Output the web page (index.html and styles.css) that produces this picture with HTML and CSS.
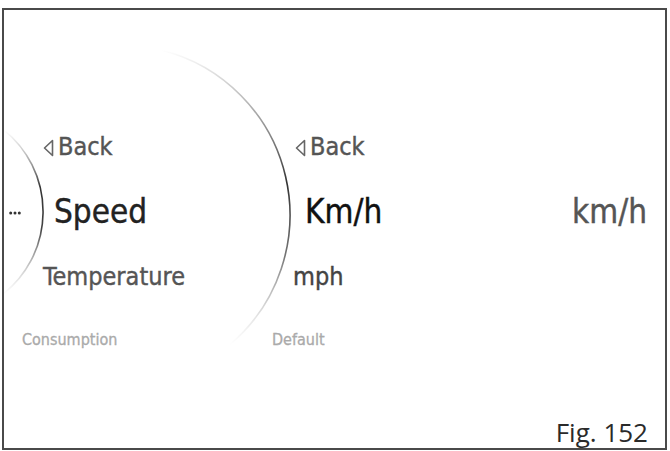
FILE: index.html
```
<!DOCTYPE html>
<html lang="en">
<head>
<meta charset="utf-8">
<title>Fig. 152 – Speed units</title>
<link rel="stylesheet" href="styles.css">
</head>
<body>
<div class="frame">
  <svg class="arcs" width="670" height="451" viewBox="0 0 670 451" aria-hidden="true">
    <defs>
      <linearGradient id="gBig" gradientUnits="userSpaceOnUse" x1="0" y1="50" x2="0" y2="345">
        <stop offset="0" stop-color="#999" stop-opacity="0"/>
        <stop offset="0.2" stop-color="#999" stop-opacity="0.8"/>
        <stop offset="0.45" stop-color="#333" stop-opacity="1"/>
        <stop offset="0.7" stop-color="#666" stop-opacity="0.9"/>
        <stop offset="1" stop-color="#bbb" stop-opacity="0"/>
      </linearGradient>
      <linearGradient id="gSmall" gradientUnits="userSpaceOnUse" x1="0" y1="130" x2="0" y2="295">
        <stop offset="0" stop-color="#888" stop-opacity="0"/>
        <stop offset="0.35" stop-color="#333" stop-opacity="1"/>
        <stop offset="0.6" stop-color="#444" stop-opacity="1"/>
        <stop offset="1" stop-color="#aaa" stop-opacity="0"/>
      </linearGradient>
    </defs>
    <path d="M161,50 A170,170 0 0 1 229.5,345" fill="none" stroke="url(#gBig)" stroke-width="1.6"/>
    <path d="M4,130 A105,105 0 0 1 2,295" fill="none" stroke="url(#gSmall)" stroke-width="1.6"/>
  </svg>

  <div class="menu menu-main">
    <div class="item back"><svg class="tri" width="11" height="18" viewBox="0 0 11 18"><path d="M9.5,1.5 L1.5,9 L9.5,16.5 Z" fill="none" stroke="#666" stroke-width="1.6" stroke-linejoin="round"/></svg>Back</div>
    <div class="item current"><svg class="dots" width="12" height="4" viewBox="0 0 12 4"><circle cx="1.7" cy="2" r="1.5"/><circle cx="6" cy="2" r="1.5"/><circle cx="10.3" cy="2" r="1.5"/></svg><span class="speed">Speed</span></div>
    <div class="item next temp">Temperature</div>
    <div class="item far cons">Consumption</div>
  </div>

  <div class="menu menu-sub">
    <div class="item back"><svg class="tri" width="11" height="18" viewBox="0 0 11 18"><path d="M9.5,1.5 L1.5,9 L9.5,16.5 Z" fill="none" stroke="#666" stroke-width="1.6" stroke-linejoin="round"/></svg>Back</div>
    <div class="item current kmh">Km/h</div>
    <div class="item next mph">mph</div>
    <div class="item far def">Default</div>
  </div>

  <div class="value">km/h</div>

  <div class="caption">Fig. 152</div>
</div>
</body>
</html>
```
FILE: styles.css
```
html, body {
  margin: 0;
  padding: 0;
  background: #fff;
}

body {
  width: 670px;
  height: 451px;
  overflow: hidden;
  font-family: "DejaVu Sans Condensed", "DejaVu Sans", sans-serif;
  font-stretch: condensed;
}

.frame {
  position: relative;
  box-sizing: border-box;
  width: 665px;
  height: 442px;
  margin: 8px 0 0 2px;
  border: 2px solid #4a4a4a;
  overflow: hidden;
  display: grid;
  grid-template-columns: 250px 250px 1fr;
  grid-template-rows: 1fr auto;
}

.arcs {
  position: absolute;
  left: -4px;
  top: -10px;
  pointer-events: none;
}

.menu {
  display: flex;
  flex-direction: column;
  align-items: flex-start;
  padding-top: 124px;
}

.item {
  line-height: 1;
  white-space: nowrap;
  -webkit-text-stroke: 0.4px currentColor;
}

.back {
  font-size: 25px;
  color: #555;
  display: flex;
  align-items: center;
  height: 25px;
}

.tri {
  margin-right: 4px;
  margin-top: 2px;
}

.current {
  margin-top: 36px;
  font-size: 33px;
  height: 33px;
}

.next {
  margin-top: 36px;
  font-size: 25px;
  height: 25px;
  color: #555;
}

.far {
  margin-top: 43px;
  font-size: 16px;
  color: #aaa;
  -webkit-text-stroke: 0.3px currentColor;
}

.menu-main .back { margin-left: 39px; }
.menu-main .current {
  display: flex;
  align-items: center;
  margin-left: 5px;
}
.dots { fill: #333; margin-right: 33px; margin-top: 2px; }
.speed { color: #222; }
.menu-main .temp { margin-left: 39px; }
.menu-main .cons { margin-left: 18px; }

.menu-sub .back { margin-left: 41px; }
.menu-sub .kmh { margin-left: 51px; color: #111; }
.menu-sub .mph { margin-left: 39px; color: #444; }
.menu-sub .def { margin-left: 18px; }

.value {
  justify-self: end;
  padding: 185px 18px 0 0;
  font-size: 33px;
  line-height: 1;
  color: #555;
  -webkit-text-stroke: 0.4px currentColor;
}

.caption {
  grid-column: 1 / -1;
  justify-self: end;
  margin: 0 17px 3px 0;
  font-family: "Open Sans", sans-serif;
  font-stretch: normal;
  font-size: 26px;
  line-height: 1;
  color: #2a2a2a;
}
```
